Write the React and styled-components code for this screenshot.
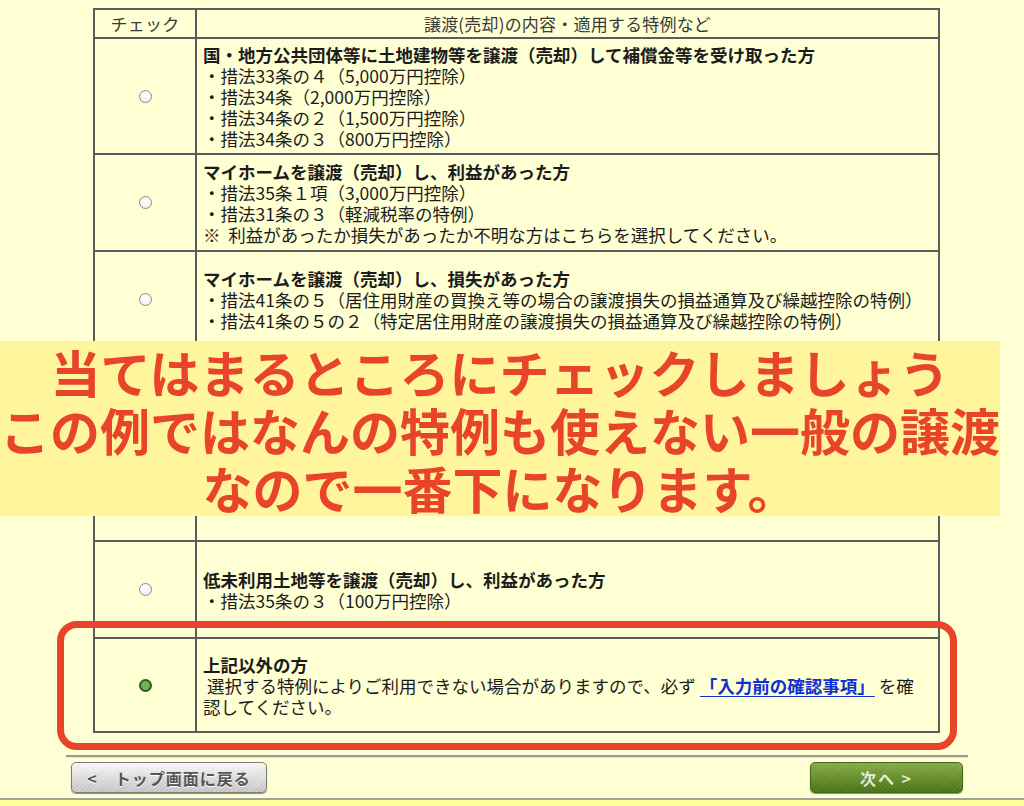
import React from 'react';
import styled, { createGlobalStyle } from 'styled-components';

const GlobalStyle = createGlobalStyle`
  * { box-sizing: border-box; }
  body {
    margin: 0;
    background: #ffffd4;
    font-family: "Noto Sans CJK JP", "Noto Sans", sans-serif;
    color: #1c1c1c;
  }
`;

// 特例の選択肢（バナーの下に隠れる行は中身なし）
const options = [
  {
    height: 116,
    title: '国・地方公共団体等に土地建物等を譲渡（売却）して補償金等を受け取った方',
    lines: [
      '・措法33条の４（5,000万円控除）',
      '・措法34条（2,000万円控除）',
      '・措法34条の２（1,500万円控除）',
      '・措法34条の３（800万円控除）',
    ],
  },
  {
    height: 97,
    title: 'マイホームを譲渡（売却）し、利益があった方',
    lines: [
      '・措法35条１項（3,000万円控除）',
      '・措法31条の３（軽減税率の特例）',
      '※  利益があったか損失があったか不明な方はこちらを選択してください。',
    ],
  },
  {
    height: 96,
    title: 'マイホームを譲渡（売却）し、損失があった方',
    lines: [
      '・措法41条の５（居住用財産の買換え等の場合の譲渡損失の損益通算及び繰越控除の特例）',
      '・措法41条の５の２（特定居住用財産の譲渡損失の損益通算及び繰越控除の特例）',
    ],
  },
  { height: 97, title: '', lines: [] },
  { height: 97, title: '', lines: [] },
  {
    height: 97,
    title: '低未利用土地等を譲渡（売却）し、利益があった方',
    lines: ['・措法35条の３（100万円控除）'],
  },
];

const App = () => (
  <>
    <GlobalStyle />
    <Page>
      <Table>
        <HeaderRow>
          <HeaderCell>チェック</HeaderCell>
          <HeaderCell>譲渡(売却)の内容・適用する特例など</HeaderCell>
        </HeaderRow>

        {options.map((opt, i) => (
          <Row key={i} $height={opt.height}>
            <CheckCell>
              <Radio />
            </CheckCell>
            <ContentCell>
              {opt.title && <Title>{opt.title}</Title>}
              {opt.lines.map((line) => (
                <Line key={line}>{line}</Line>
              ))}
            </ContentCell>
          </Row>
        ))}

        <Row $height={94}>
          <CheckCell>
            <Radio $checked />
          </CheckCell>
          <ContentCell>
            <Title>上記以外の方</Title>
            <Line>
              {' 選択する特例によりご利用できない場合がありますので、必ず '}
              <Link href="#">「入力前の確認事項」</Link>
              {' を確'}
            </Line>
            <Line>認してください。</Line>
          </ContentCell>
        </Row>
      </Table>

      <Divider />

      <ButtonBar>
        <BackButton>&lt;　トップ画面に戻る</BackButton>
        <NextButton>次へ &gt;</NextButton>
      </ButtonBar>

      <Footer />

      <Banner>
        <BannerLine>当てはまるところにチェックしましょう</BannerLine>
        <BannerLine>この例ではなんの特例も使えない一般の譲渡</BannerLine>
        <BannerLine>なので一番下になります。</BannerLine>
      </Banner>

      <Highlight />
    </Page>
  </>
);

// Styled components
const Page = styled.div`
  position: relative;
  width: 1024px;
  height: 806px;
  overflow: hidden;
  padding-top: 8px;
`;

const Table = styled.div`
  margin-left: 93px;
  width: 847px;
  border: 2px solid #5c5c5c;
  border-top: none;
  background: #ffffd4;
`;

const HeaderRow = styled.div`
  display: grid;
  grid-template-columns: 102px 1fr;
  height: 29px;
  border-top: 2px solid #5c5c5c;
`;

const HeaderCell = styled.div`
  display: flex;
  align-items: center;
  justify-content: center;
  font-size: 17px;
  color: #3a3a3a;
  letter-spacing: 0.2px;

  &:first-child {
    border-right: 2px solid #5c5c5c;
  }
`;

const Row = styled.div`
  display: grid;
  grid-template-columns: 102px 1fr;
  height: ${(p) => p.$height}px;
  border-top: 2px solid #5c5c5c;
`;

const CheckCell = styled.div`
  display: flex;
  align-items: center;
  justify-content: center;
  border-right: 2px solid #5c5c5c;
`;

const ContentCell = styled.div`
  display: flex;
  flex-direction: column;
  justify-content: center;
  padding: 0 6px;
  font-size: 17.5px;
  line-height: 21px;
`;

const Title = styled.div`
  font-weight: 700;
  white-space: nowrap;
`;

const Line = styled.div`
  white-space: pre;
`;

const Link = styled.a`
  color: #1030d0;
  font-weight: 700;
  text-decoration: underline;
  text-underline-offset: 3px;
`;

const Radio = styled.span`
  display: block;
  width: 13px;
  height: 13px;
  border-radius: 50%;
  border: ${(p) => (p.$checked ? '2px solid #2f5a22' : '1px solid #8a8a8a')};
  background: ${(p) =>
    p.$checked ? '#6cb552' : 'radial-gradient(circle at 50% 30%, #ffffff, #ececec)'};
`;

const Divider = styled.div`
  margin: 22px 56px 0 66px;
  height: 2px;
  background: #9a9a94;
  box-shadow: 0 1px 0 #e6e6c8;
`;

const ButtonBar = styled.div`
  display: flex;
  justify-content: space-between;
  padding: 5px 61px 0 71px;
`;

const buttonBase = `
  height: 31px;
  border-radius: 5px;
  display: flex;
  align-items: center;
  justify-content: center;
  font-family: "Noto Sans CJK JP", sans-serif;
  font-size: 16px;
  font-weight: 700;
  cursor: pointer;
`;

const BackButton = styled.button`
  ${buttonBase}
  width: 196px;
  color: #555;
  border: 1px solid #7c7c7c;
  background:
    repeating-linear-gradient(135deg, rgba(255, 255, 255, 0.25) 0 1px, transparent 1px 3px),
    linear-gradient(#f6f6f6, #d9d9d9 55%, #c2c2c2);
  box-shadow: 0 1px 1px rgba(0, 0, 0, 0.45);
  text-shadow: 0 1px 0 #fff;
  letter-spacing: 1px;
`;

const NextButton = styled.button`
  ${buttonBase}
  width: 153px;
  color: #e4ecd2;
  border: 1px solid #45661f;
  background:
    repeating-linear-gradient(135deg, rgba(255, 255, 255, 0.07) 0 1px, transparent 1px 3px),
    linear-gradient(#86ab45, #668f2c 50%, #4a7219);
  box-shadow: 0 1px 1px rgba(0, 0, 0, 0.45);
  letter-spacing: 2px;
`;

const Footer = styled.div`
  margin-top: 5px;
  height: 8px;
  border-top: 2px solid #a3a39a;
  background: #ffff9c;
`;

const Banner = styled.div`
  position: absolute;
  top: 341px;
  left: 0;
  width: 1000px;
  height: 175px;
  background: #fff59c;
  display: flex;
  flex-direction: column;
  align-items: center;
  justify-content: center;
  color: #e8442b;
  white-space: nowrap;
`;

const BannerLine = styled.div`
  height: 58px;
  font-size: 50px;
  font-weight: 700;
  line-height: 58px;
`;

const Highlight = styled.div`
  position: absolute;
  top: 621px;
  left: 57px;
  width: 900px;
  height: 129px;
  border: 7px solid #e8442b;
  border-radius: 20px;
  pointer-events: none;
`;

export default App;
